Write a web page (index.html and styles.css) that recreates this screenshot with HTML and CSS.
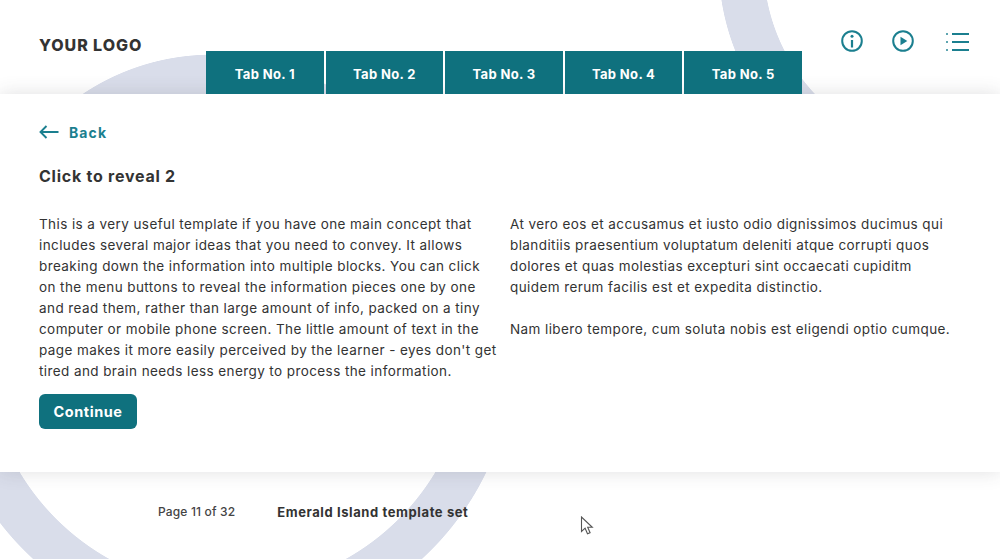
FILE: index.html
```html
<!DOCTYPE html>
<html lang="en">
<head>
<meta charset="utf-8">
<title>Click to reveal 2</title>
<link rel="stylesheet" href="styles.css">
</head>
<body>
<div class="page">
  <header class="header">
    <div class="logo">YOUR LOGO</div>
    <nav class="tabs">
      <a class="tab">Tab No. 1</a>
      <a class="tab">Tab No. 2</a>
      <a class="tab">Tab No. 3</a>
      <a class="tab">Tab No. 4</a>
      <a class="tab">Tab No. 5</a>
    </nav>
    <div class="tools">
      <svg class="tool" width="24" height="24" viewBox="0 0 24 24" fill="none" stroke="#1b7f8f" stroke-width="2"><circle cx="12" cy="12" r="9.8"/><path d="M12 11v7.5" stroke-width="2.2"/><circle cx="12" cy="7.3" r="1.5" fill="#1b7f8f" stroke="none"/></svg>
      <svg class="tool" width="24" height="24" viewBox="0 0 24 24" fill="none" stroke="#1b7f8f" stroke-width="2"><circle cx="12" cy="12" r="9.8"/><path d="M9.5 7.8v8.4l6.8-4.2z" fill="#1b7f8f" stroke="none"/></svg>
      <svg class="tool list" width="24" height="20" viewBox="0 0 24 20" fill="none" stroke="#1b7f8f" stroke-width="2"><path d="M0 2h2M0 10h2M0 18h2" opacity="0.7"/><path d="M6 2H23M6 10H23M6 18H23"/></svg>
    </div>
  </header>
  <main class="panel">
    <a class="back">
      <svg width="20" height="14" viewBox="0 0 20 14" fill="none" stroke="#1b7f8f" stroke-width="1.9"><path d="M19.5 7H1.5M7.5 1L1.5 7l6 6"/></svg>
      <span>Back</span>
    </a>
    <h1 class="title">Click to reveal 2</h1>
    <div class="columns">
      <div class="col">
        <p>This is a very useful template if you have one main concept that includes several major ideas that you need to convey. It allows breaking down the information into multiple blocks. You can click on the menu buttons to reveal the information pieces one by one and read them, rather than large amount of info, packed on a tiny computer or mobile phone screen. The little amount of text in the page makes it more easily perceived by the learner - eyes don't get tired and brain needs less energy to process the information.</p>
        <button class="continue">Continue</button>
      </div>
      <div class="col">
        <p class="para">At vero eos et accusamus et iusto odio dignissimos ducimus qui blanditiis praesentium voluptatum deleniti atque corrupti quos dolores et quas molestias excepturi sint occaecati cupiditm quidem rerum facilis est et expedita distinctio.</p>
        <p>Nam libero tempore, cum soluta nobis est eligendi optio cumque.</p>
      </div>
    </div>
  </main>
  <footer class="footer">
    <span class="pageno">Page 11 of 32</span>
    <span class="setname">Emerald Island template set</span>
  </footer>
  <svg class="cursor" width="15" height="20" viewBox="0 0 15 20"><path d="M1.5 1v14.5l3.6-3.3 2.4 5.6 2.6-1.1-2.4-5.4h4.6z" fill="#fff" stroke="#555" stroke-width="1.1"/></svg>
</div>
</body>
</html>
```
FILE: styles.css
```css
* { box-sizing: border-box; }
html, body { margin: 0; padding: 0; }
body {
  font-family: "Inter", "Liberation Sans", sans-serif;
  color: #333;
  background: #fff;
}
.page {
  position: relative;
  width: 1000px;
  height: 559px;
  overflow: hidden;
  display: flex;
  flex-direction: column;
  background: #fff;
}
.header {
  height: 94px;
  display: flex;
  padding-left: 39px;
  flex: none;
  background:
    radial-gradient(circle at 954px -36px, transparent 190px, #d9ddea 190.7px, #d9ddea 235px, transparent 235.7px),
    radial-gradient(circle at 212px 287px, transparent 187px, #d9ddea 187.7px, #d9ddea 232px, transparent 232.7px),
    #fff;
}
.logo {
  width: 167px;
  padding-top: 36px;
  font-size: 16px;
  line-height: 18px;
  font-weight: 800;
  color: #333;
  letter-spacing: 0.95px;
}
.tabs {
  width: 596px;
  margin-top: 51px;
  display: flex;
  gap: 2px;
  position: relative;
  z-index: 2;
}
.tab {
  flex: 1;
  display: flex;
  align-items: center;
  justify-content: center;
  padding-top: 2px;
  background: #0f717e;
  color: #fff;
  font-size: 13px;
  font-weight: 700;
  letter-spacing: 0.35px;
}
.tools {
  display: flex;
  align-items: flex-start;
  gap: 28px;
  margin-left: 38px;
  padding-top: 29px;
}
.tool:nth-child(2) { margin-left: -1px; }
.list { margin-top: 3px; margin-left: 3px; }
.panel {
  height: 378px;
  flex: none;
  background: #fff;
  box-shadow: 0 0 18px rgba(60, 60, 70, 0.16);
  padding: 28px 0 0 39px;
  position: relative;
  z-index: 1;
}
.back {
  display: flex;
  align-items: center;
  gap: 10px;
  height: 20px;
  color: #1b7f8f;
  font-size: 14px;
  font-weight: 700;
  letter-spacing: 1.1px;
}
.title {
  margin: 24px 0 0;
  font-size: 16px;
  line-height: 20px;
  font-weight: 700;
  color: #333;
  letter-spacing: 0.75px;
}
.columns {
  display: flex;
  gap: 10px;
  margin-top: 28px;
}
.col { width: 461px; flex: none; }
.col p {
  margin: 0;
  font-size: 13.5px;
  line-height: 21px;
  color: #333;
  letter-spacing: 0.41px;
}
.col + .col { width: 453px; }
.col .para { margin-bottom: 21px; }
.continue {
  display: block;
  margin-top: 12px;
  width: 98px;
  height: 35px;
  border: none;
  border-radius: 6px;
  background: #0f717e;
  color: #fff;
  font-family: inherit;
  font-size: 14.5px;
  font-weight: 700;
  letter-spacing: 0.55px;
}
.footer {
  display: flex;
  align-items: flex-start;
  flex: 1;
  padding: 32px 0 0 158px;
  gap: 42px;
  font-size: 12px;
  line-height: 16px;
  background:
    radial-gradient(circle at 227.5px -124.6px, transparent 242px, #d9ddea 242.7px, #d9ddea 287px, transparent 287.7px),
    #fff;
}
.pageno { font-weight: 500; color: #444; letter-spacing: 0.15px; }
.setname { font-weight: 700; color: #333; font-size: 13px; letter-spacing: 0.6px; }
.cursor {
  position: absolute;
  left: 580px;
  top: 516px;
}
```
